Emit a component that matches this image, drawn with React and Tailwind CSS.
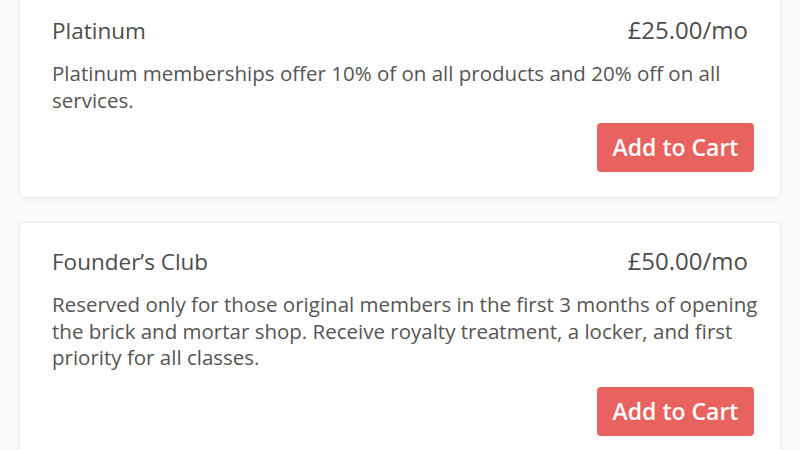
import React from "react";

const plans = [
  {
    name: "Platinum",
    price: "£25.00/mo",
    text: "Platinum memberships offer 10% of on all products and 20% off on all services.",
    gap: "mt-[10px]",
  },
  {
    name: "Founder’s Club",
    price: "£50.00/mo",
    text: "Reserved only for those original members in the first 3 months of opening the brick and mortar shop. Receive royalty treatment, a locker, and first priority for all classes.",
    gap: "mt-[16px]",
  },
];

function PlanCard({ plan }) {
  return (
    <div className="rounded-[6px] border border-[#ececec] bg-white pl-[32px] pr-[18px] pt-[23px] pb-[25px] shadow-[0_1px_8px_rgba(0,0,0,0.05)]">
      <div className="flex items-baseline justify-between pr-[14px]">
        <h2 className="text-[22.5px] leading-[30px] text-[#4d4d4d]">{plan.name}</h2>
        <span className="text-[24px] leading-[30px] text-[#4d4d4d]">{plan.price}</span>
      </div>
      <p className="mt-[14px] text-[20.5px] leading-[26.5px] text-[#555]">
        {plan.text}
      </p>
      <div className={`flex justify-end pr-[8px] ${plan.gap}`}>
        <button className="h-[49px] w-[157px] rounded-[4px] bg-[#e8625f] text-[23px] font-semibold text-white">
          Add to Cart
        </button>
      </div>
    </div>
  );
}

export default function App() {
  return (
    <div
      className="h-[450px] w-full overflow-hidden bg-[#fafafa] px-[19px]"
      style={{ fontFamily: '"Open Sans", "Liberation Sans", sans-serif' }}
    >
      <div className="-mt-[9px] flex flex-col gap-[24px]">
        {plans.map((p) => (
          <PlanCard key={p.name} plan={p} />
        ))}
      </div>
    </div>
  );
}
